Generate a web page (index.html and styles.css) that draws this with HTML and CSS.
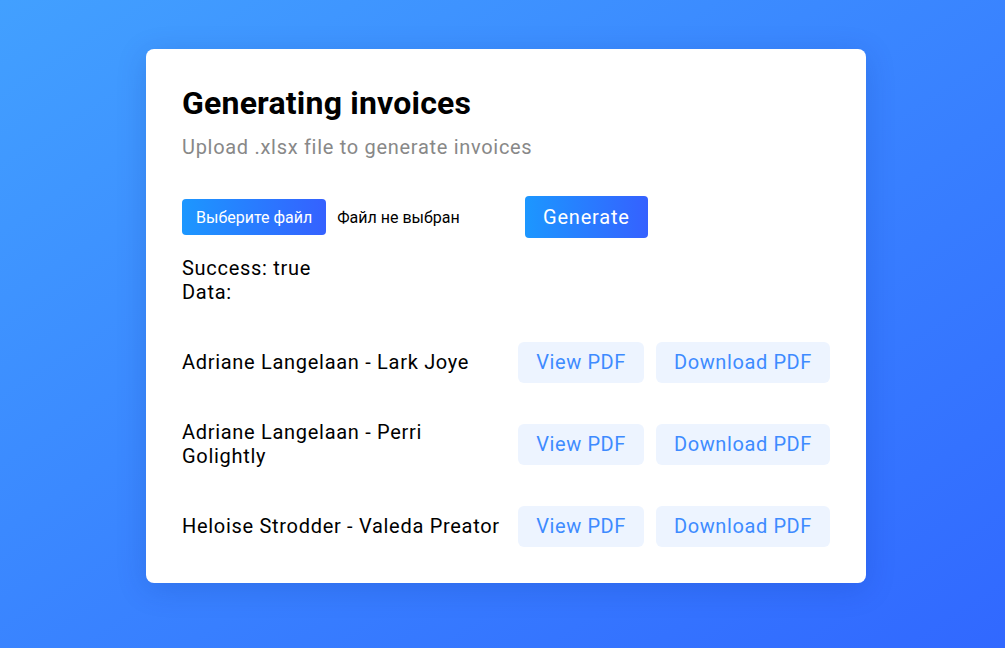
FILE: index.html
```html
<!DOCTYPE html>
<html lang="en">
<head>
<meta charset="utf-8">
<title>Generating invoices</title>
<link rel="stylesheet" href="styles.css">
</head>
<body>
<main class="page">
  <section class="card">
    <h1 class="title">Generating invoices</h1>
    <p class="subtitle">Upload .xlsx file to generate invoices</p>
    <div class="upload-row">
      <div class="file-input">
        <span class="file-button">Выберите файл</span>
        <span class="file-name">Файл не выбран</span>
      </div>
      <button class="generate">Generate</button>
    </div>
    <div class="status">
      <div>Success: true</div>
      <div>Data:</div>
    </div>
    <ul class="invoices">
      <li class="invoice">
        <span class="invoice-name">Adriane Langelaan - Lark Joye</span>
        <button class="pdf-btn">View PDF</button>
        <button class="pdf-btn">Download PDF</button>
      </li>
      <li class="invoice">
        <span class="invoice-name">Adriane Langelaan - Perri Golightly</span>
        <button class="pdf-btn">View PDF</button>
        <button class="pdf-btn">Download PDF</button>
      </li>
      <li class="invoice">
        <span class="invoice-name">Heloise Strodder - Valeda Preator</span>
        <button class="pdf-btn">View PDF</button>
        <button class="pdf-btn">Download PDF</button>
      </li>
    </ul>
  </section>
</main>
</body>
</html>
```

FILE: styles.css
```css
* { box-sizing: border-box; }

html, body {
  margin: 0;
  height: 100%;
}

body {
  font-family: Roboto, "Noto Sans", sans-serif;
  color: #000;
  background: linear-gradient(to bottom right, #42a0ff, #3168ff);
}

.page {
  display: flex;
  justify-content: center;
  padding: 49px 0 0 7px;
  height: 100%;
}

.card {
  width: 720px;
  height: 534px;
  background: #fff;
  border-radius: 8px;
  padding: 36px 36px 16px;
  box-shadow: 0 6px 30px rgba(10, 40, 140, 0.18);
  letter-spacing: 0.7px;
}

.title {
  margin: 0;
  font-size: 32px;
  font-weight: 700;
  line-height: 37px;
  letter-spacing: 0.2px;
}

.subtitle {
  margin: 13px 0 0;
  font-size: 20px;
  line-height: 24px;
  color: #888;
}

.upload-row {
  display: flex;
  align-items: center;
  margin-top: 37px;
}

.file-input {
  display: flex;
  align-items: center;
  width: 343px;
  letter-spacing: 0;
}

.file-button {
  display: inline-flex;
  align-items: center;
  height: 36px;
  padding: 0 14px;
  border-radius: 4px;
  background: linear-gradient(to right, #1c97ff, #3561ff);
  color: #fff;
  font-size: 16px;
}

.file-name {
  margin-left: 11px;
  font-size: 16px;
}

.generate {
  height: 42px;
  padding: 0 18px;
  border: 0;
  border-radius: 4px;
  background: linear-gradient(to right, #1c97ff, #3561ff);
  color: #fff;
  font-family: inherit;
  font-size: 20px;
  letter-spacing: 0.8px;
}

.status {
  margin-top: 18px;
  font-size: 20px;
  line-height: 24px;
}

.invoices {
  list-style: none;
  margin: 17px 0 0;
  padding: 0;
}

.invoice {
  display: flex;
  align-items: center;
  height: 82px;
  font-size: 20px;
  line-height: 24px;
}

.invoice-name {
  flex: 1;
}

.pdf-btn {
  height: 41px;
  margin-left: 12px;
  padding: 0 18px;
  border: 0;
  border-radius: 6px;
  background: #edf4ff;
  color: #3e8bff;
  font-family: inherit;
  font-size: 20px;
  letter-spacing: 0.6px;
}
```
